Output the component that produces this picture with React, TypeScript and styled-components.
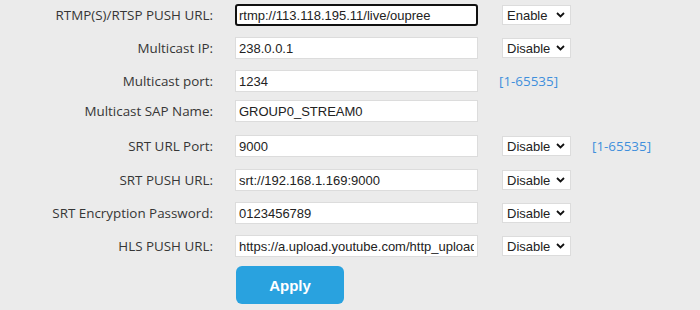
import React from "react";
import styled, { createGlobalStyle } from "styled-components";

const Global = createGlobalStyle`
  html, body { margin: 0; padding: 0; background: #ebebeb; }
  body { width: 700px; height: 310px; overflow: hidden; }
`;

const Form = styled.div`
  display: flex;
  flex-direction: column;
  padding-top: 4px;
`;

const Row = styled.div<{ $h: number }>`
  display: flex;
  align-items: flex-start;
  height: ${(p) => p.$h}px;
`;

const Label = styled.label`
  width: 213px;
  margin-right: 22px;
  text-align: right;
  font-family: "Open Sans", "Noto Sans", sans-serif;
  font-size: 13.4px;
  line-height: 22px;
  color: #363636;
  white-space: nowrap;
`;

const TextInput = styled.input<{ $focus?: boolean }>`
  box-sizing: border-box;
  width: 243px;
  height: 22px;
  margin: 0;
  padding: 0 ${(p) => (p.$focus ? 2 : 3)}px;
  border: ${(p) => (p.$focus ? "2px solid #111" : "1px solid #dcdcdc")};
  border-radius: ${(p) => (p.$focus ? "3px" : "0")};
  background: #fff;
  font-family: "Liberation Sans", Arial, sans-serif;
  font-size: 13px;
  color: #222;
  outline: none;
`;

const SelectWrap = styled.div`
  position: relative;
  margin-left: 24px;
  margin-top: 1px;
  width: 69px;
  height: 20px;
`;

const Select = styled.select`
  box-sizing: border-box;
  appearance: none;
  -webkit-appearance: none;
  width: 69px;
  height: 20px;
  margin: 0;
  padding: 0 0 0 4px;
  border: 1px solid #dcdcdc;
  border-radius: 0;
  background: #fff;
  font-family: "Liberation Sans", Arial, sans-serif;
  font-size: 13px;
  color: #222;
  outline: none;
`;

const Chevron = styled.svg`
  position: absolute;
  right: 6px;
  top: 7px;
  width: 9px;
  height: 6px;
  pointer-events: none;
`;

const Note = styled.span`
  margin-left: 21px;
  font-family: "Open Sans", "Noto Sans", sans-serif;
  font-size: 13.4px;
  line-height: 22px;
  color: #3f8fdc;
`;

const ButtonRow = styled.div`
  display: flex;
  padding-left: 236px;
  padding-top: 9px;
`;

const ApplyButton = styled.button`
  width: 108px;
  height: 38px;
  border: none;
  border-radius: 6px;
  background: #29a2df;
  color: #fff;
  font-family: "Liberation Sans", Arial, sans-serif;
  font-weight: bold;
  font-size: 15px;
  cursor: pointer;
`;

type RowDef = {
  label: string;
  value: string;
  select?: string;
  note?: string;
  focus?: boolean;
  h: number;
};

const rows: RowDef[] = [
  { label: "RTMP(S)/RTSP PUSH URL:", value: "rtmp://113.118.195.11/live/oupree", select: "Enable", focus: true, h: 33 },
  { label: "Multicast IP:", value: "238.0.0.1", select: "Disable", h: 33 },
  { label: "Multicast port:", value: "1234", note: "[1-65535]", h: 30 },
  { label: "Multicast SAP Name:", value: "GROUP0_STREAM0", h: 35 },
  { label: "SRT URL Port:", value: "9000", select: "Disable", note: "[1-65535]", h: 34 },
  { label: "SRT PUSH URL:", value: "srt://192.168.1.169:9000", select: "Disable", h: 33 },
  { label: "SRT Encryption Password:", value: "0123456789", select: "Disable", h: 33 },
  { label: "HLS PUSH URL:", value: "https://a.upload.youtube.com/http_upload_hls", select: "Disable", h: 22 },
];

function Dropdown({ value }: { value: string }) {
  return (
    <SelectWrap>
      <Select defaultValue={value}>
        <option value="Enable">Enable</option>
        <option value="Disable">Disable</option>
      </Select>
      <Chevron viewBox="0 0 9 6">
        <path d="M1 1 L4.5 4.5 L8 1" fill="none" stroke="#111" strokeWidth="1.8" />
      </Chevron>
    </SelectWrap>
  );
}

export default function App() {
  return (
    <>
      <Global />
      <Form>
        {rows.map((r) => (
          <Row key={r.label} $h={r.h}>
            <Label>{r.label}</Label>
            <TextInput $focus={r.focus} defaultValue={r.value} />
            {r.select && <Dropdown value={r.select} />}
            {r.note && <Note>{r.note}</Note>}
          </Row>
        ))}
        <ButtonRow>
          <ApplyButton>Apply</ApplyButton>
        </ButtonRow>
      </Form>
    </>
  );
}
